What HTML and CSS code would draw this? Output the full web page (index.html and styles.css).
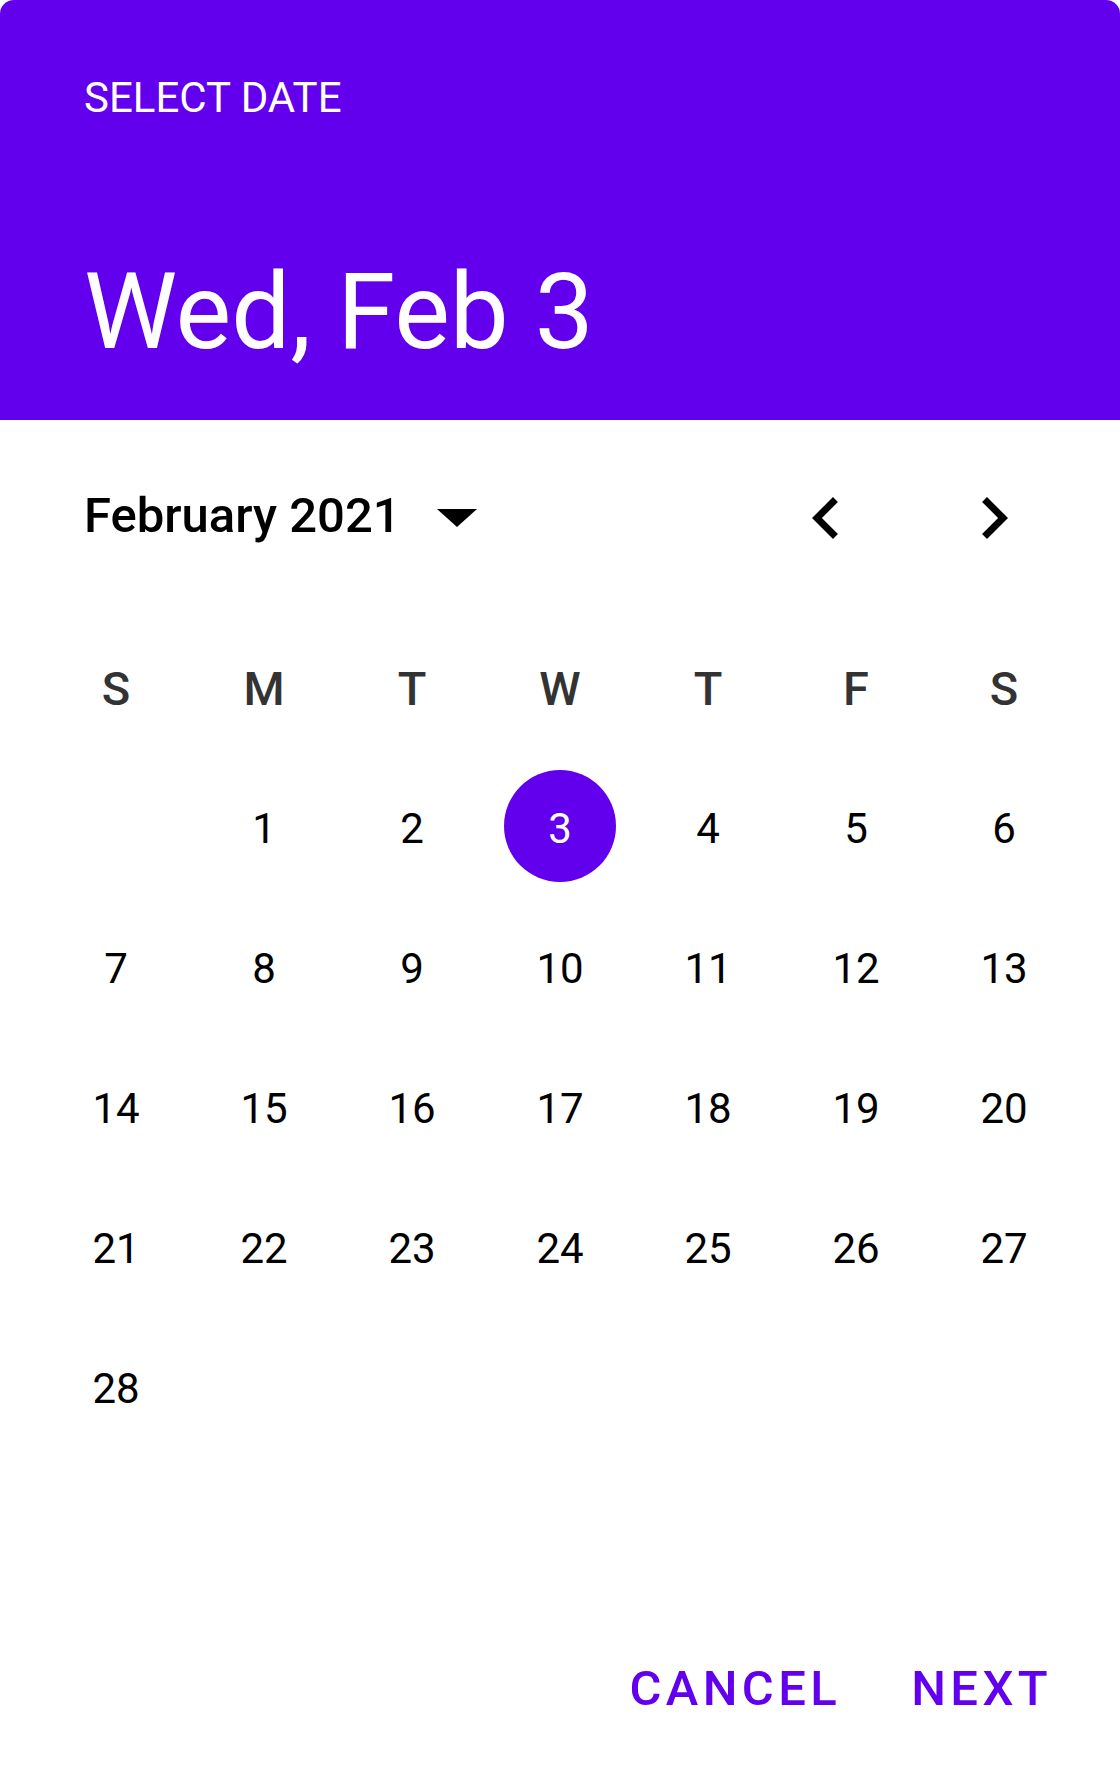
FILE: index.html
```html
<!DOCTYPE html>
<html lang="en">
<head>
<meta charset="utf-8">
<title>Select date</title>
<link rel="stylesheet" href="styles.css">
</head>
<body>
<div class="dialog">
  <header class="header">
    <div class="overline">SELECT DATE</div>
    <div class="headline">Wed, Feb 3</div>
  </header>
  <section class="body">
    <div class="month-row">
      <div class="month-select">
        <span class="month-label">February 2021</span>
        <svg class="drop" width="40" height="18" viewBox="0 0 40 18"><polygon points="0,0 40,0 20,18" fill="#000"/></svg>
      </div>
      <div class="nav">
        <svg class="nav-icon" width="84" height="84" viewBox="0 0 24 24"><path d="M15.41 7.41L14 6l-6 6 6 6 1.41-1.41L10.83 12z" fill="#000"/></svg>
        <svg class="nav-icon" width="84" height="84" viewBox="0 0 24 24"><path d="M10 6L8.59 7.41 13.17 12l-4.58 4.59L10 18l6-6z" fill="#000"/></svg>
      </div>
    </div>
    <div class="grid">
      <div class="wd">S</div><div class="wd">M</div><div class="wd">T</div><div class="wd">W</div><div class="wd">T</div><div class="wd">F</div><div class="wd">S</div>
      <div class="day"></div><div class="day">1</div><div class="day">2</div><div class="day"><span class="sel">3</span></div><div class="day">4</div><div class="day">5</div><div class="day">6</div>
      <div class="day">7</div><div class="day">8</div><div class="day">9</div><div class="day">10</div><div class="day">11</div><div class="day">12</div><div class="day">13</div>
      <div class="day">14</div><div class="day">15</div><div class="day">16</div><div class="day">17</div><div class="day">18</div><div class="day">19</div><div class="day">20</div>
      <div class="day">21</div><div class="day">22</div><div class="day">23</div><div class="day">24</div><div class="day">25</div><div class="day">26</div><div class="day">27</div>
      <div class="day">28</div>
    </div>
  </section>
  <footer class="actions">
    <button class="btn">CANCEL</button>
    <button class="btn">NEXT</button>
  </footer>
</div>
</body>
</html>
```
FILE: styles.css
```css
html, body {
  margin: 0;
  padding: 0;
  background: #ffffff;
}
body {
  font-family: "Roboto", "Liberation Sans", sans-serif;
  color: #000;
}
.dialog {
  width: 1120px;
  height: 1778px;
  display: flex;
  flex-direction: column;
  background: #fff;
  border-radius: 14px;
  overflow: hidden;
}
.header {
  background: #6200ee;
  color: #fff;
  height: 420px;
  box-sizing: border-box;
  padding: 73px 84px 0 84px;
}
.overline {
  font-size: 42px;
  line-height: 50px;
  font-weight: 400;
}
.headline {
  margin-top: 130px;
  font-size: 105px;
  line-height: 120px;
  font-weight: 400;
}
.body {
  flex: 1;
  padding-top: 56px;
}
.month-row {
  display: flex;
  align-items: center;
  justify-content: space-between;
  height: 84px;
  padding: 0 84px;
}
.month-select {
  display: flex;
  align-items: center;
}
.month-label {
  font-size: 49px;
  font-weight: 500;
  line-height: 80px;
  margin-top: -4px;
}
.drop {
  margin-left: 36px;
  display: block;
}
.nav {
  display: flex;
  gap: 84px;
}
.nav-icon {
  display: block;
}
.grid {
  margin: 58px 42px 0 42px;
  display: grid;
  grid-template-columns: repeat(7, 148px);
  grid-auto-rows: 140px;
}
.wd {
  display: flex;
  align-items: center;
  justify-content: center;
  font-size: 47px;
  font-weight: 500;
  color: #333;
}
.day {
  display: flex;
  align-items: center;
  justify-content: center;
  font-size: 42px;
  color: #000;
}
.sel {
  box-sizing: border-box;
  width: 112px;
  height: 112px;
  border-radius: 50%;
  background: #6200ee;
  color: #fff;
  display: flex;
  align-items: center;
  justify-content: center;
  margin-top: -4px;
  padding-top: 4px;
}
.actions {
  display: flex;
  justify-content: flex-end;
  gap: 14px;
  padding: 0 40px 26px 0;
}
.btn {
  font-family: "Roboto", "Liberation Sans", sans-serif;
  font-size: 49px;
  font-weight: 500;
  letter-spacing: 4.4px;
  color: #6200ee;
  background: transparent;
  border: none;
  height: 126px;
  padding: 0 28px;
  line-height: 126px;
}
```
